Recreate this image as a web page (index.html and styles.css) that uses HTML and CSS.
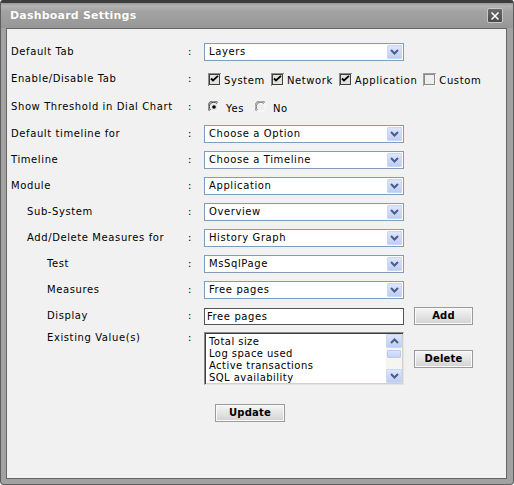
FILE: index.html
```html
<!DOCTYPE html>
<html>
<head>
<meta charset="utf-8">
<title>Dashboard Settings</title>
<link rel="stylesheet" href="styles.css">
</head>
<body>
<div class="window">
  <div class="titlebar">
    <span class="title">Dashboard Settings</span>
    <span class="close"><svg width="10" height="10" viewBox="0 0 10 10"><path d="M1.5 1.5 L8.5 8.5 M8.5 1.5 L1.5 8.5" stroke="#fff" stroke-width="1.6" fill="none"/></svg></span>
  </div>
  <div class="panel">
    <div class="row">
      <div class="label">Default Tab</div><div class="colon">:</div>
      <div class="ctrl"><div class="select"><span class="val">Layers</span><span class="arrow"><svg width="9" height="6" viewBox="0 0 9 6"><path d="M1 1 L4.5 4.5 L8 1" stroke="#4a5d88" stroke-width="2" fill="none"/></svg></span></div></div>
    </div>
    <div class="row tall">
      <div class="label">Enable/Disable Tab</div><div class="colon">:</div>
      <div class="ctrl">
        <span class="opt"><svg class="box" width="13" height="13" viewBox="0 0 13 13"><rect x="0" y="0" width="13" height="13" fill="#8a8a8a"/><rect x="1" y="1" width="12" height="12" fill="#f4f4f4"/><rect x="1" y="1" width="11" height="11" fill="#404040"/><rect x="2" y="2" width="9" height="9" fill="#e2e2de"/><path d="M3 5.5 L5 7.5 L10 2.8" stroke="#000" stroke-width="1.8" fill="none"/></svg><span class="t">System</span></span>
        <span class="opt"><svg class="box" width="13" height="13" viewBox="0 0 13 13"><rect x="0" y="0" width="13" height="13" fill="#8a8a8a"/><rect x="1" y="1" width="12" height="12" fill="#f4f4f4"/><rect x="1" y="1" width="11" height="11" fill="#404040"/><rect x="2" y="2" width="9" height="9" fill="#e2e2de"/><path d="M3 5.5 L5 7.5 L10 2.8" stroke="#000" stroke-width="1.8" fill="none"/></svg><span class="t">Network</span></span>
        <span class="opt"><svg class="box" width="13" height="13" viewBox="0 0 13 13"><rect x="0" y="0" width="13" height="13" fill="#8a8a8a"/><rect x="1" y="1" width="12" height="12" fill="#f4f4f4"/><rect x="1" y="1" width="11" height="11" fill="#404040"/><rect x="2" y="2" width="9" height="9" fill="#e2e2de"/><path d="M3 5.5 L5 7.5 L10 2.8" stroke="#000" stroke-width="1.8" fill="none"/></svg><span class="t">Application</span></span>
        <span class="opt"><svg class="box" width="13" height="13" viewBox="0 0 13 13"><rect x="0" y="0" width="13" height="13" fill="#a0a0a0"/><rect x="1" y="1" width="12" height="12" fill="#f8f8f8"/><rect x="1" y="1" width="11" height="11" fill="#8a8a8a"/><rect x="2" y="2" width="9" height="9" fill="#eeeeea"/></svg><span class="t">Custom</span></span>
      </div>
    </div>
    <div class="row tall">
      <div class="label">Show Threshold in Dial Chart</div><div class="colon">:</div>
      <div class="ctrl">
        <span class="opt radio-opt"><svg class="radio" width="12" height="12" viewBox="0 0 12 12"><circle cx="6" cy="6" r="5.5" fill="#f4f4f4"/><path d="M1.6 9.8 A5.2 5.2 0 0 1 9.8 1.6" stroke="#7a7a7a" stroke-width="1.3" fill="none"/><path d="M2.6 8.8 A3.9 3.9 0 0 1 8.8 2.6" stroke="#404040" stroke-width="1" fill="none"/><circle cx="6" cy="6" r="3.6" fill="#e6e6e2"/><circle cx="6" cy="6" r="1.8" fill="#000"/></svg><span class="t">Yes</span></span>
        <span class="opt radio-opt"><svg class="radio" width="12" height="12" viewBox="0 0 12 12"><circle cx="6" cy="6" r="5.5" fill="#f8f8f8"/><path d="M1.6 9.8 A5.2 5.2 0 0 1 9.8 1.6" stroke="#999" stroke-width="1.3" fill="none"/><path d="M2.6 8.8 A3.9 3.9 0 0 1 8.8 2.6" stroke="#777" stroke-width="1" fill="none"/><circle cx="6" cy="6" r="3.6" fill="#eeeeea"/></svg><span class="t">No</span></span>
      </div>
    </div>
    <div class="row">
      <div class="label">Default timeline for</div><div class="colon">:</div>
      <div class="ctrl"><div class="select"><span class="val">Choose a Option</span><span class="arrow"><svg width="9" height="6" viewBox="0 0 9 6"><path d="M1 1 L4.5 4.5 L8 1" stroke="#4a5d88" stroke-width="2" fill="none"/></svg></span></div></div>
    </div>
    <div class="row">
      <div class="label">Timeline</div><div class="colon">:</div>
      <div class="ctrl"><div class="select"><span class="val">Choose a Timeline</span><span class="arrow"><svg width="9" height="6" viewBox="0 0 9 6"><path d="M1 1 L4.5 4.5 L8 1" stroke="#4a5d88" stroke-width="2" fill="none"/></svg></span></div></div>
    </div>
    <div class="row">
      <div class="label">Module</div><div class="colon">:</div>
      <div class="ctrl"><div class="select"><span class="val">Application</span><span class="arrow"><svg width="9" height="6" viewBox="0 0 9 6"><path d="M1 1 L4.5 4.5 L8 1" stroke="#4a5d88" stroke-width="2" fill="none"/></svg></span></div></div>
    </div>
    <div class="row">
      <div class="label i1">Sub-System</div><div class="colon">:</div>
      <div class="ctrl"><div class="select"><span class="val">Overview</span><span class="arrow"><svg width="9" height="6" viewBox="0 0 9 6"><path d="M1 1 L4.5 4.5 L8 1" stroke="#4a5d88" stroke-width="2" fill="none"/></svg></span></div></div>
    </div>
    <div class="row">
      <div class="label i1">Add/Delete Measures for</div><div class="colon">:</div>
      <div class="ctrl"><div class="select"><span class="val">History Graph</span><span class="arrow"><svg width="9" height="6" viewBox="0 0 9 6"><path d="M1 1 L4.5 4.5 L8 1" stroke="#4a5d88" stroke-width="2" fill="none"/></svg></span></div></div>
    </div>
    <div class="row">
      <div class="label i2">Test</div><div class="colon">:</div>
      <div class="ctrl"><div class="select"><span class="val">MsSqlPage</span><span class="arrow"><svg width="9" height="6" viewBox="0 0 9 6"><path d="M1 1 L4.5 4.5 L8 1" stroke="#4a5d88" stroke-width="2" fill="none"/></svg></span></div></div>
    </div>
    <div class="row">
      <div class="label i2">Measures</div><div class="colon">:</div>
      <div class="ctrl"><div class="select"><span class="val">Free pages</span><span class="arrow"><svg width="9" height="6" viewBox="0 0 9 6"><path d="M1 1 L4.5 4.5 L8 1" stroke="#4a5d88" stroke-width="2" fill="none"/></svg></span></div></div>
    </div>
    <div class="row">
      <div class="label i2">Display</div><div class="colon">:</div>
      <div class="ctrl"><div class="input">Free pages</div><div class="btn">Add</div></div>
    </div>
    <div class="row top">
      <div class="label i2">Existing Value(s)</div><div class="colon">:</div>
      <div class="ctrl">
        <div class="listbox">
          <div class="items">
            <div>Total size</div>
            <div>Log space used</div>
            <div>Active transactions</div>
            <div>SQL availability</div>
          </div>
          <div class="scrollbar">
            <div class="sbtn"><svg width="9" height="6" viewBox="0 0 9 6"><path d="M1 5 L4.5 1.5 L8 5" stroke="#4a5d88" stroke-width="2" fill="none"/></svg></div>
            <div class="track"><div class="thumb"></div></div>
            <div class="sbtn"><svg width="9" height="6" viewBox="0 0 9 6"><path d="M1 1 L4.5 4.5 L8 1" stroke="#4a5d88" stroke-width="2" fill="none"/></svg></div>
          </div>
        </div>
        <div class="btn">Delete</div>
      </div>
    </div>
    <div class="row actions">
      <div class="label"></div><div class="colon"></div>
      <div class="ctrl"><div class="btn update">Update</div></div>
    </div>
  </div>
</div>
</body>
</html>
```
FILE: styles.css
```css
* { box-sizing: border-box; }
body {
  margin: 0;
  background: #fff;
  font-family: "DejaVu Sans", Verdana, sans-serif;
  font-size: 10px;
  line-height: 12px;
  letter-spacing: 0.6px;
  color: #000;
}
.window {
  width: 514px;
  height: 485px;
  display: flex;
  flex-direction: column;
  background: #a2a2a2;
  border: 1px solid #5e5e5e;
  border-top: 3px solid #3c3c3c;
  border-radius: 3px 3px 4px 4px;
  padding: 0 6px 5px 5px;
}
.titlebar {
  height: 25px;
  margin: 0 -6px 0 -5px;
  padding: 0 10px 0 9px;
  display: flex;
  align-items: center;
  justify-content: space-between;
  background: linear-gradient(#9a9a9a 0, #b3b3b3 12%, #a2a2a2 35%, #979797 100%);
}
.title {
  color: #fff;
  font-weight: bold;
  font-size: 11px;
  letter-spacing: 0.2px;
  text-shadow: 0 0 1px #888;
}
.close {
  width: 16px;
  height: 15px;
  display: flex;
  align-items: center;
  justify-content: center;
  background: linear-gradient(#6a6a6a, #4a4a4a);
  border: 1px solid #c8c8c8;
  border-radius: 2px;
}
.panel {
  flex: 1;
  background: #f1f1f1;
  border: 1px solid #666;
  padding: 10px 0 0 4px;
}
.row {
  display: flex;
  align-items: center;
  height: 26px;
}
.row.tall { height: 28px; }
.row.top {
  align-items: flex-start;
  height: auto;
  padding-top: 3px;
}
.row.actions {
  height: auto;
  margin-top: 19px;
}
.label { width: 177px; flex: none; white-space: nowrap; }
.label.i1 { padding-left: 16px; }
.label.i2 { padding-left: 36px; }
.colon { width: 16px; flex: none; }
.ctrl {
  display: flex;
  align-items: center;
}
.select {
  width: 200px;
  height: 18px;
  border: 1px solid #7f9db9;
  background: #fff;
  display: flex;
  align-items: center;
  padding: 1px 1px 1px 0;
}
.select .val { flex: 1; padding-left: 4px; }
.arrow, .sbtn {
  width: 15px;
  height: 14px;
  display: flex;
  align-items: center;
  justify-content: center;
  background: linear-gradient(#dde6fc, #bccdf5);
  border: 1px solid #c9d6f6;
  border-radius: 1px;
}
.opt {
  display: inline-flex;
  align-items: center;
  margin-right: 2px;
}
.opt .box { margin: 0 3px 0 4px; flex: none; }
.opt .t { padding-top: 3px; }
.radio-opt { margin-right: 7px; }
.opt .radio { margin: 0 6px 0 4px; flex: none; }
.input {
  width: 200px;
  height: 17px;
  border: 1px solid #555;
  background: #fff;
  padding-left: 2px;
  line-height: 15px;
}
.btn {
  width: 59px;
  height: 18px;
  margin-left: 10px;
  border: 1px solid #9a9a9a;
  box-shadow: inset 0 0 0 1px #fafafa;
  background: linear-gradient(#f6f6f6, #d2d2d2);
  font-weight: bold;
  letter-spacing: 0.2px;
  text-align: center;
  line-height: 15px;
}
.btn.update { width: 70px; margin-left: 11px; }
.listbox {
  width: 200px;
  height: 53px;
  display: flex;
  background: #fff;
  border: 1px solid;
  border-color: #8a8a8a #e4e4e4 #e4e4e4 #8a8a8a;
  box-shadow: inset 1px 1px 0 #3f3f3f, inset -1px -1px 0 #d4d0c8;
}
.items {
  flex: 1;
  padding: 3px 0 0 4px;
  line-height: 12px;
  letter-spacing: 0.45px;
}
.scrollbar {
  width: 16px;
  margin: 1px 1px 1px 0;
  display: flex;
  flex-direction: column;
  background: #f5f5f1;
}
.sbtn { width: 16px; height: 14px; }
.track {
  flex: 1;
  padding-top: 2px;
}
.thumb {
  height: 8px;
  margin: 0 1px;
  background: linear-gradient(#dbe4fb, #c3d2f6);
  border: 1px solid #b9c9f2;
  border-radius: 1px;
}
```
